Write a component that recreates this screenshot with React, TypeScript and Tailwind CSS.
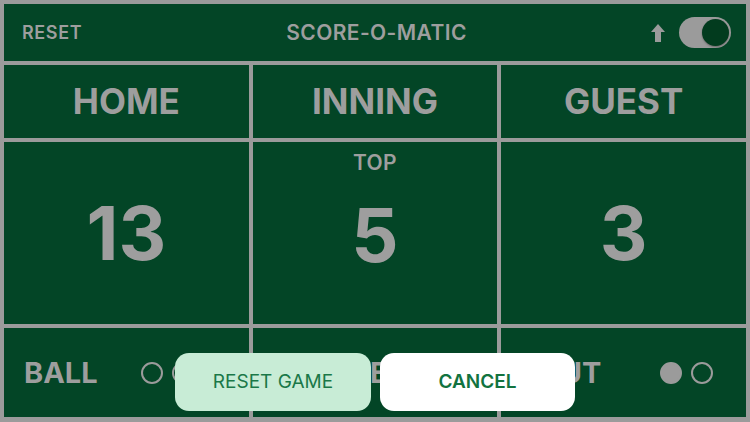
import React from "react";

const G = "#9b9b9b";

function Dots({ filled, count }: { filled: number; count: number }) {
  return (
    <div className="flex items-center gap-[9px]">
      {Array.from({ length: count }).map((_, i) => (
        <div
          key={i}
          className={
            i < filled
              ? "w-[22px] h-[22px] rounded-full bg-[#9b9b9b] border-2 border-[#9b9b9b]"
              : "w-[22px] h-[22px] rounded-full border-2 border-[#9b9b9b]"
          }
        />
      ))}
    </div>
  );
}

export default function App() {
  return (
    <div
      className="relative w-[750px] h-[422px] overflow-hidden bg-[#9b9b9b] pt-[4px] px-[4px] pb-[5px] text-[#9e9e9e]"
      style={{ fontFamily: "Inter, 'Noto Sans', sans-serif" }}
    >
      <div className="grid h-full grid-cols-3 grid-rows-[57px_73px_182px_89px] gap-[4px]">
        {/* Header */}
        <div className="col-span-3 bg-[#034526] grid grid-cols-[1fr_auto_1fr] items-center pl-[18px] pr-[15px]">
          <div className="text-[18px] font-semibold tracking-[0.6px]">RESET</div>
          <div className="text-[21px] font-semibold tracking-[0.4px]">SCORE-O-MATIC</div>
          <div className="flex items-center justify-end gap-[14px]">
            <svg width="14" height="18" viewBox="0 0 14 18">
              <path d="M7 0 L14 8 H10 V18 H4 V8 H0 Z" fill={G} />
            </svg>
            <div className="w-[52px] h-[31px] rounded-full bg-[#9b9b9b] p-[2px] flex justify-end">
              <div className="w-[27px] h-[27px] rounded-full bg-[#023b1e] shadow-[0_1px_2px_rgba(0,0,0,0.35)]" />
            </div>
          </div>
        </div>

        {/* Labels */}
        <div className="bg-[#034526] flex items-center justify-center text-[35px] font-bold">HOME</div>
        <div className="bg-[#034526] flex items-center justify-center text-[35px] font-bold">INNING</div>
        <div className="bg-[#034526] flex items-center justify-center text-[35px] font-bold">GUEST</div>

        {/* Scores */}
        <div className="bg-[#034526] flex items-center justify-center text-[74px] font-bold leading-none">13</div>
        <div className="bg-[#034526] flex flex-col items-center pt-[9px]">
          <div className="text-[21px] font-semibold leading-[24px] tracking-[0.3px]">TOP</div>
          <div className="flex-1 flex items-center justify-center text-[74px] font-bold leading-none pb-[30px]">5</div>
        </div>
        <div className="bg-[#034526] flex items-center justify-center text-[74px] font-bold leading-none">3</div>

        {/* Counts */}
        <div className="bg-[#034526] flex items-center justify-between pl-[20px] pr-[24px]">
          <div className="text-[29px] font-bold">BALL</div>
          <Dots filled={0} count={3} />
        </div>
        <div className="bg-[#034526] flex items-center justify-between pl-[31px] pr-[30px]">
          <div className="text-[29px] font-bold">STRIKE</div>
          <Dots filled={0} count={2} />
        </div>
        <div className="bg-[#034526] flex items-center justify-between pl-[37px] pr-[33px]">
          <div className="text-[29px] font-bold">OUT</div>
          <Dots filled={1} count={2} />
        </div>
      </div>

      {/* Action sheet buttons */}
      <div className="absolute bottom-[11px] left-[175px] flex gap-[9px]">
        <button className="w-[196px] h-[58px] rounded-[14px] bg-[#c8ecd6] text-[#1a7848] text-[19px] font-normal">
          RESET GAME
        </button>
        <button className="w-[195px] h-[58px] rounded-[14px] bg-white text-[#12733f] text-[19px] font-semibold">
          CANCEL
        </button>
      </div>
    </div>
  );
}
